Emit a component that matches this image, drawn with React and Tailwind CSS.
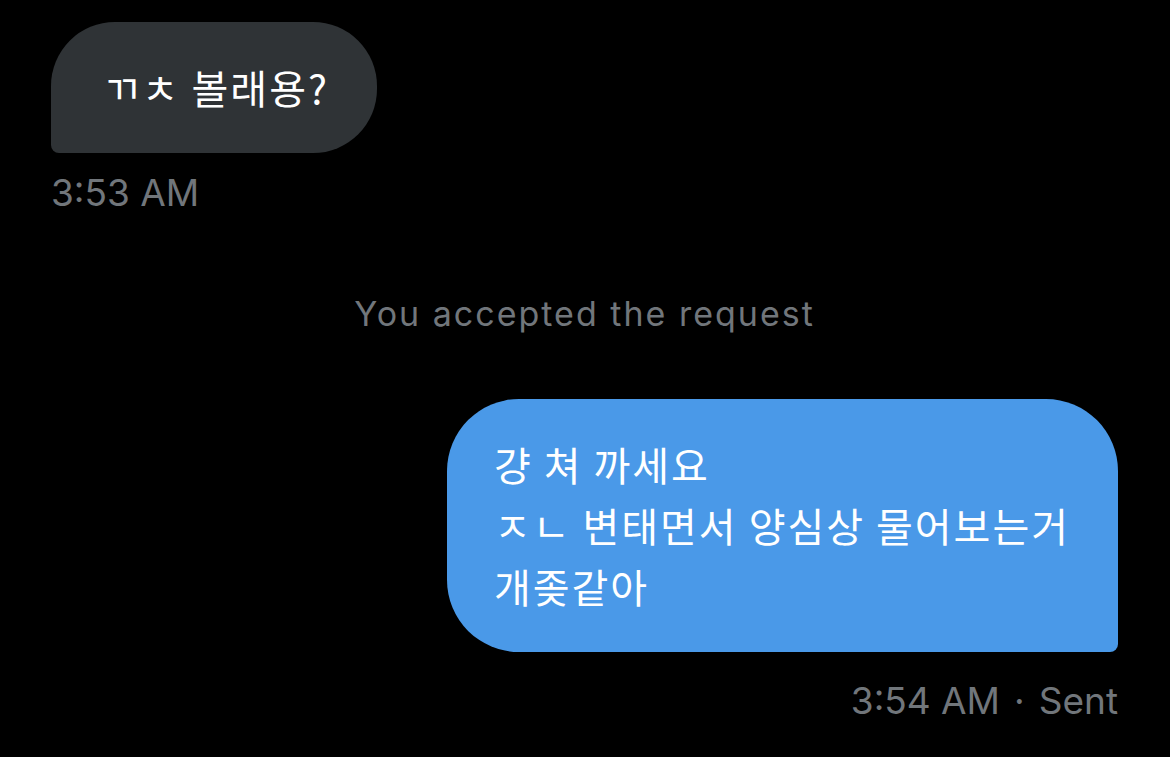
import React from "react";

const KO = {
  fontFamily: '"Noto Sans CJK KR", "Noto Sans", sans-serif',
};

const messages = [
  { id: 1, from: "them", lines: ["ㄲㅊ 볼래용?"], time: "3:53 AM" },
  {
    id: 2,
    from: "me",
    lines: ["걍 쳐 까세요", "ㅈㄴ 변태면서 양심상 물어보는거", "개좆같아"],
    time: "3:54 AM",
    status: "Sent",
  },
];

const Bubble = ({ msg }) => {
  const mine = msg.from === "me";
  return (
    <div className={mine ? "flex flex-col items-end" : "flex flex-col items-start"}>
      <div
        className={
          mine
            ? "bg-[#4a99e8] text-white rounded-[72px] rounded-br-[8px] pl-[47px] pr-[48px] py-[35px]"
            : "bg-[#2f3336] text-white rounded-[64px] rounded-bl-[8px] pl-[52px] pr-[48px] py-[35px]"
        }
      >
        {msg.lines.map((line, i) => (
          <div
            key={i}
            className="text-[40px] leading-[61px] tracking-[2px] whitespace-nowrap"
            style={KO}
          >
            {line}
          </div>
        ))}
      </div>
      <div
        className={
          "font-['Inter',sans-serif] text-[37px] leading-[46px] text-[#71767b] " +
          (mine ? "mt-[26px]" : "mt-[17px]")
        }
      >
        {msg.time}
        {msg.status && (
          <>
            <span className="mx-[14px]">·</span>
            {msg.status}
          </>
        )}
      </div>
    </div>
  );
};

export default function App() {
  return (
    <div className="min-h-screen w-full bg-black flex flex-col pl-[51px] pr-[52px] pt-[22px] overflow-hidden">
      <Bubble msg={messages[0]} />
      <div className="mt-[78px] text-center font-['Inter',sans-serif] text-[34px] leading-[40px] tracking-[2px] text-[#71767b]">
        You accepted the request
      </div>
      <div className="mt-[65px]">
        <Bubble msg={messages[1]} />
      </div>
    </div>
  );
}
